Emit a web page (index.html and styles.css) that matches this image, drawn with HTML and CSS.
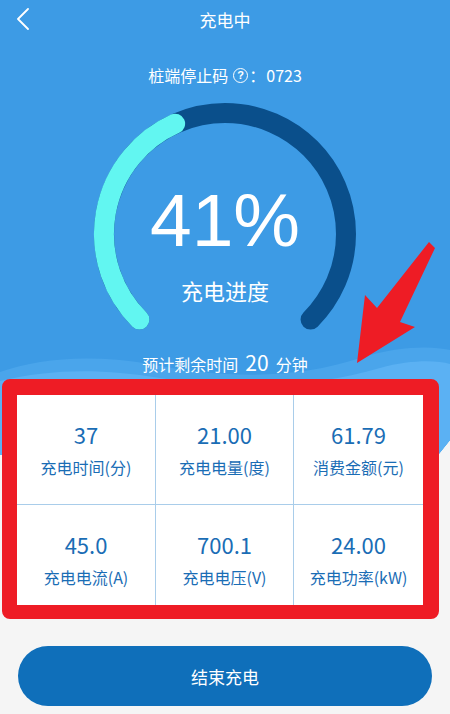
FILE: index.html
```html
<!DOCTYPE html>
<html lang="zh-CN">
<head>
<meta charset="utf-8">
<title>充电中</title>
<link rel="stylesheet" href="styles.css">
</head>
<body>
<div class="hero">
  <svg class="hero-bg" width="450" height="455" viewBox="0 0 450 455" aria-hidden="true">
    <path d="M0,0 H450 V440 L438,455 H0 Z" fill="#3d9be5"/>
    <path d="M0,372 C40,358 90,354 150,364 C230,380 300,378 360,358 C400,346 430,346 450,350 V440 L438,455 H0 Z" fill="#4aa5eb"/>
    <path d="M0,381 C50,369 100,368 160,378 C240,392 320,386 380,368 C410,360 435,360 450,364 V440 L438,455 H0 Z" fill="#5bb1f3"/>
  </svg>
  <header class="nav">
    <svg class="back" width="14" height="22" viewBox="0 0 14 22" aria-hidden="true">
      <polyline points="12,1 2,11 12,21" fill="none" stroke="#fff" stroke-width="1.8" stroke-linecap="round" stroke-linejoin="round"/>
    </svg>
    <h1 class="title">充电中</h1>
  </header>
  <p class="stop-code">桩端停止码<span class="help">?</span><span class="colon">：</span>0723</p>
  <div class="gauge">
    <svg width="264" height="232" viewBox="0 0 264 232" aria-hidden="true">
      <path d="M46.44,217.56 A121,121 0 1 1 217.56,217.56" fill="none" stroke="#0a4f8b" stroke-width="20" stroke-linecap="round"/>
      <path d="M46.44,217.56 A121,121 0 0 1 82.1,21.7" fill="none" stroke="#62f6f1" stroke-width="20" stroke-linecap="round"/>
    </svg>
    <div class="gauge-text">
      <div class="percent">41%</div>
      <div class="gauge-label">充电进度</div>
    </div>
  </div>
  <p class="eta">预计剩余时间<span class="eta-num">20</span>分钟</p>
</div>

<section class="stats-frame">
  <div class="stats">
    <div class="cell"><div class="value">37</div><div class="label">充电时间(分)</div></div>
    <div class="cell"><div class="value">21.00</div><div class="label">充电电量(度)</div></div>
    <div class="cell"><div class="value">61.79</div><div class="label">消费金额(元)</div></div>
    <div class="cell"><div class="value">45.0</div><div class="label">充电电流(A)</div></div>
    <div class="cell"><div class="value">700.1</div><div class="label">充电电压(V)</div></div>
    <div class="cell"><div class="value">24.00</div><div class="label">充电功率(kW)</div></div>
  </div>
</section>

<button class="end-btn" type="button">结束充电</button>

<svg class="arrow" width="450" height="714" viewBox="0 0 450 714" aria-hidden="true">
  <polygon points="357,363 365,295 377,308 429,242 435,248 400,322 415,327" fill="#ee1c25"/>
</svg>
</body>
</html>
```

FILE: styles.css
```css
html, body {
  margin: 0;
  padding: 0;
}

body {
  position: relative;
  width: 450px;
  height: 714px;
  overflow: hidden;
  background: #f5f5f5;
  font-family: "Noto Sans CJK SC", "Noto Sans", sans-serif;
  color: #fff;
}

.hero {
  position: relative;
  height: 455px;
}

.hero-bg {
  position: absolute;
  left: 0;
  top: 0;
  display: block;
}

.nav {
  position: relative;
  height: 40px;
  display: flex;
  align-items: center;
  justify-content: center;
}

.back {
  position: absolute;
  left: 16px;
  top: 8px;
}

.title {
  margin: 0;
  font-size: 17px;
  font-weight: normal;
  line-height: 40px;
}

.stop-code {
  position: relative;
  margin: 24px 0 0;
  font-size: 16px;
  line-height: 22px;
  display: flex;
  justify-content: center;
  align-items: center;
}

.help {
  display: inline-flex;
  align-items: center;
  justify-content: center;
  box-sizing: border-box;
  width: 15px;
  height: 15px;
  margin-left: 5px;
  border: 1.4px solid #fff;
  border-radius: 50%;
  font-family: "Liberation Sans", sans-serif;
  font-size: 11px;
  font-weight: bold;
  line-height: 1;
}

.colon {
  margin-left: 1px;
  margin-right: 1px;
}

.gauge {
  position: relative;
  width: 264px;
  height: 232px;
  margin: 16px auto 0;
}

.gauge svg {
  display: block;
}

.gauge-text {
  position: absolute;
  left: 0;
  top: 0;
  width: 100%;
  padding-top: 81px;
  display: flex;
  flex-direction: column;
  align-items: center;
}

.percent {
  font-family: "Liberation Sans", Arial, sans-serif;
  font-size: 75px;
  line-height: 75px;
}

.gauge-label {
  margin-top: 17px;
  font-size: 22px;
  line-height: 30px;
}

.eta {
  position: relative;
  margin: 16px 0 0;
  font-size: 16px;
  line-height: 24px;
  text-align: center;
}

.eta-num {
  margin: 0 7px 0 7px;
  font-size: 21px;
}

.stats-frame {
  position: relative;
  margin: -76px 11px 0 2px;
  border-style: solid;
  border-color: #ee1c25;
  border-width: 16px 16px 14px 15px;
  border-radius: 8px;
  background: #fff;
}

.stats {
  display: grid;
  grid-template-columns: 139px 138px 1fr;
  grid-template-rows: 110px 100px;
  background: #fff;
}

.cell {
  box-sizing: border-box;
  padding-top: 26px;
  text-align: center;
  color: #1a6db5;
  border-right: 1px solid #a9cdea;
}

.cell:nth-child(3n) {
  border-right: none;
}

.cell:nth-child(-n+3) {
  border-bottom: 1px solid #a9cdea;
}

.value {
  font-size: 22px;
  line-height: 26px;
}

.label {
  margin-top: 10px;
  font-size: 16px;
  line-height: 20px;
}

.end-btn {
  display: block;
  box-sizing: border-box;
  width: 414px;
  height: 60px;
  margin: 27px 0 0 18px;
  border: none;
  border-radius: 30px;
  background: #0f6fba;
  color: #fff;
  font-family: "Noto Sans CJK SC", sans-serif;
  font-size: 17px;
}

.arrow {
  position: absolute;
  left: 0;
  top: 0;
  pointer-events: none;
}
```
